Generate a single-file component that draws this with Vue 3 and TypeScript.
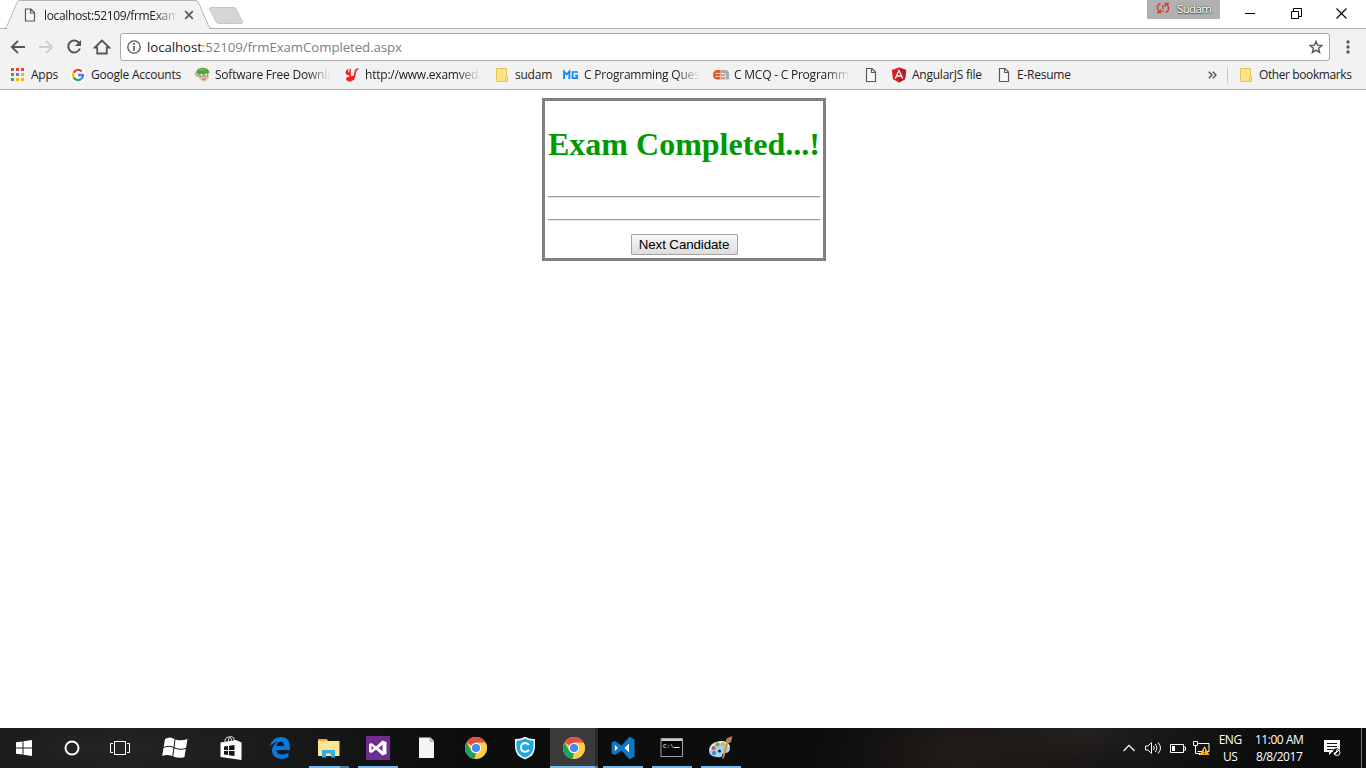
<script setup lang="ts">
interface Bookmark {
  icon: string
  label: string
  width: number
  fade?: boolean
}

const bookmarks: Bookmark[] = [
  { icon: 'apps', label: 'Apps', width: 60 },
  { icon: 'google', label: 'Google Accounts', width: 124 },
  { icon: 'softpedia', label: 'Software Free Downlo', width: 150, fade: true },
  { icon: 'veda', label: 'http://www.examveda', width: 150, fade: true },
  { icon: 'folder', label: 'sudam', width: 69 },
  { icon: 'mg', label: 'C Programming Quest', width: 150, fade: true },
  { icon: 'er', label: 'C MCQ - C Programm', width: 150, fade: true },
  { icon: 'file', label: '', width: 28 },
  { icon: 'angular', label: 'AngularJS file', width: 105 },
  { icon: 'file', label: 'E-Resume', width: 90 },
]

interface TaskItem {
  icon: string
  state?: 'running' | 'active' | 'grouped'
}

const tasks: TaskItem[] = [
  { icon: 'store' },
  { icon: 'edge' },
  { icon: 'explorer', state: 'grouped' },
  { icon: 'vs', state: 'running' },
  { icon: 'doc' },
  { icon: 'chrome' },
  { icon: 'shield' },
  { icon: 'chrome', state: 'active' },
  { icon: 'vscode', state: 'running' },
  { icon: 'cmd', state: 'running' },
  { icon: 'paint', state: 'running' },
]
</script>

<template>
  <div class="screen">
    <header class="tabstrip">
      <div class="tab">
        <svg class="tab-shape" width="245" height="29" viewBox="0 0 245 29">
          <path d="M7 29L18 1H197L209 29Z" fill="#f2f2f2" />
          <path d="M0 28.500H4Q6 28 7 26L17 2.500Q18 .500 20 .500H195Q197.500 .500 198.500 2.500L208.500 26Q210 28.500 212 28.500H245" fill="none" stroke="#b2b2b2" />
          <path d="M211 7.500H234Q235.500 7.500 236.500 9.500L242.500 22Q243 23.500 241 23.500H219Q217 23.500 216 21.500L209.500 9Q209 7.500 211 7.500Z" fill="#d6d6d6" stroke="#c6c6c6" />
        </svg>
        <svg class="tab-page" width="12" height="14" viewBox="0 0 12 14"><path d="M1.500 1H7L10.500 4.500V13H1.500ZM6.500 1V5H10.500" fill="#f7f7f7" stroke="#5a5a5a" stroke-width="1.200" /></svg>
        <span class="tab-title">localhost:52109/frmExam</span>
        <svg class="tab-close" width="10" height="10" viewBox="0 0 10 10"><path d="M1.200 1.200L8.800 8.800M8.800 1.200L1.200 8.800" stroke="#5a5a5a" stroke-width="1.700" /></svg>
      </div>
      <div class="profile">
        <svg width="14" height="12" viewBox="0 0 14 12" fill="none" stroke="#d23b30" stroke-width="1.400">
          <path d="M4.500 1.500Q1 3 1.500 6.500Q2.300 9 4 9.800M1 10.500H4.700V7.500M9.500 10.500Q13 9 12.500 5.500Q11.700 3 10 2.200M13 1.500H9.300V4.500M7 3V7M7 8.300V9.800" />
        </svg>
        <span>Sudam</span>
      </div>
      <div class="window-controls">
        <svg width="11" height="11" viewBox="0 0 11 11"><path d="M0 5.500H10" stroke="#000" /></svg>
        <svg width="11" height="11" viewBox="0 0 11 11" fill="none" stroke="#000"><path d="M.5 3.500H7.500V10.500H.5ZM2.500 3.500V.5H10.500V8.500H7.500" /></svg>
        <svg width="11" height="11" viewBox="0 0 11 11"><path d="M.5 .5L10.500 10.500M10.500 .5L.5 10.500" stroke="#000" stroke-width="1.100" /></svg>
      </div>
    </header>

    <div class="toolbar">
      <div class="nav">
        <svg width="16" height="16" viewBox="0 0 16 16"><path d="M15 8H2.500M8 1.800L1.800 8L8 14.200" fill="none" stroke="#555" stroke-width="1.900" /></svg>
        <svg width="16" height="16" viewBox="0 0 16 16"><path d="M1 8H13.500M8 1.800L14.200 8L8 14.200" fill="none" stroke="#d0d0d0" stroke-width="1.900" /></svg>
        <svg width="16" height="16" viewBox="0 0 16 16"><path d="M13.300 4.300A6 6 0 1 0 13.900 9.500" fill="none" stroke="#555" stroke-width="2" /><path d="M15 1V7H9Z" fill="#555" /></svg>
        <svg width="18" height="16" viewBox="0 0 18 16"><path d="M9 1.500L1.800 8.500H4.200V14.500H13.800V8.500H16.200Z" fill="none" stroke="#555" stroke-width="1.800" /></svg>
      </div>
      <div class="address">
        <svg width="14" height="14" viewBox="0 0 14 14"><circle cx="7" cy="7" r="6.200" fill="none" stroke="#555" stroke-width="1.300" /><path d="M7 6V10.800M7 3V4.700" stroke="#555" stroke-width="1.700" /></svg>
        <span class="url"><b>localhost</b>:52109/frmExamCompleted.aspx</span>
        <svg class="star" width="14" height="14" viewBox="0 0 14 14"><path d="M7 1.400L8.600 5.200L12.800 5.500L9.600 8.200L10.600 12.400L7 10.100L3.400 12.400L4.400 8.200L1.200 5.500L5.400 5.200Z" fill="none" stroke="#555" stroke-width="1.400" /></svg>
      </div>
      <svg class="menu" width="4" height="14" viewBox="0 0 4 14" fill="#555"><circle cx="2" cy="2" r="1.650" /><circle cx="2" cy="7" r="1.650" /><circle cx="2" cy="12" r="1.650" /></svg>
    </div>

    <nav class="bookmarks">
      <div v-for="(item, i) in bookmarks" :key="i" class="bookmark" :style="{ width: item.width + 'px' }">
        <svg width="16" height="16" viewBox="0 0 16 16">
          <g v-if="item.icon === 'apps'">
            <path d="M1 1h3v3H1zM6 1h3v3H6zM11 1h3v3H11z" fill="#ea4335" />
            <path d="M1 6h3v3H1zM1 11h3v3H1z" fill="#34a853" /><path d="M6 6h3v3H6z" fill="#4285f4" />
            <path d="M11 6h3v3H11zM6 11h3v3H6zM11 11h3v3H11z" fill="#fbb400" />
          </g>
          <g v-else-if="item.icon === 'google'" fill="none" stroke-width="2.300">
            <circle cx="8" cy="8" r="8" fill="#fff" />
            <path d="M11.800 4.500A5 5 0 0 0 3.600 5.800" stroke="#ea4335" /><path d="M3.600 5.800A5 5 0 0 0 3.600 10.400" stroke="#fbbc05" />
            <path d="M3.600 10.400A5 5 0 0 0 11 12.100" stroke="#34a853" /><path d="M11 12.100A5 5 0 0 0 13 8H8" stroke="#4285f4" />
          </g>
          <g v-else-if="item.icon === 'softpedia'">
            <path d="M4 8L14.500 7L15 11L11 15L6 13Z" fill="#efc49a" /><path d="M2 5Q4 .5 9 .8Q15 1 15.500 6L12 7L3 7.500Z" fill="#56a43c" /><path d="M5 3Q8 1.500 11 3" stroke="#8bc56f" fill="none" />
            <path d="M0 6L5 7L7 11L2 9.500Z" fill="#c6b98b" /><circle cx="7.500" cy="8" r="1.700" fill="#e9f4e8" stroke="#567b62" stroke-width=".8" /><circle cx="12" cy="7.700" r="1.700" fill="#e9f4e8" stroke="#567b62" stroke-width=".8" /><path d="M8 12Q10 13 12 11.500" fill="none" stroke="#a75c44" stroke-width=".8" />
          </g>
          <g v-else-if="item.icon === 'veda'">
            <path d="M4.500 1.500Q.5 4 2 7Q3 8.500 5 8L5.500 9.500Q1.800 10 2 12.500Q4 15.500 8 14Q10 13 9.500 8.500L8 10Q6 8 7 1.500L5.500 2.500L5 5.500L4 5Z" fill="#f51e20" /><path d="M9 13Q11 9 11.500 4Q12 2 14.500 2M8.500 9L10 11" fill="none" stroke="#f51e20" stroke-width="1.700" />
          </g>
          <g v-else-if="item.icon === 'folder'"><path d="M2.500 1.500H12.500V10H13.500V14.500H2.500Z" fill="#ffe38b" stroke="#e6c65b" /><path d="M11.500 14V10.500H13" fill="none" stroke="#e6c65b" /></g>
          <g v-else-if="item.icon === 'mg'" fill="none" stroke="#0788f5">
            <path d="M1 12V4.500L3.700 7.500L6.400 4.500V12" stroke-width="1.800" /><path d="M15 5H9.500V11.200H14.200V8.500H12" stroke-width="1.700" />
          </g>
          <g v-else-if="item.icon === 'er'">
            <path d="M7.500 3H5Q0 3 0 8Q0 12.500 5 12.500H7.500Z" fill="#e85426" /><path d="M8 3H12Q16 3 16 7V12.500H8Z" fill="#aaa9ae" />
            <path d="M2.500 6.500H7.500M2.500 9.500H7.500M8 6.500H12Q13.500 8 12 9.500H8M12 9.500L13 12.500" stroke="#f5e9e5" fill="none" stroke-width=".9" />
          </g>
          <path v-else-if="item.icon === 'file'" d="M3.500 1.500H9L12.500 5V14.500H3.500ZM8.500 1.500V5.500H12.500" fill="#f9f9f9" stroke="#5a5a5a" stroke-width="1.200" />
          <g v-else><path d="M8 .5L15.200 3L14 12.200L8 15.500L2 12.200L.8 3Z" fill="#dd1b2a" /><path d="M8 .5L15.200 3L14 12.200L8 15.500Z" fill="#b51b2b" /><path d="M4.300 11.500L8 3.300L11.700 11.500M5.500 9H10.500" fill="none" stroke="#fff" stroke-width="1.300" /></g>
        </svg>
        <span v-if="item.label" :class="['label', { fade: item.fade }]">{{ item.label }}</span>
      </div>
      <div class="bookmark-end">
        <svg width="9" height="8" viewBox="0 0 9 8"><path d="M.8 .8L4 4L.8 7.200M4.800 .8L8 4L4.800 7.200" fill="none" stroke="#555" stroke-width="1.500" /></svg>
        <i></i>
        <svg width="16" height="16" viewBox="0 0 16 16"><path d="M2.500 1.500H12.500V10H13.500V14.500H2.500Z" fill="#ffe38b" stroke="#e6c65b" /><path d="M11.500 14V10.500H13" fill="none" stroke="#e6c65b" /></svg>
        <span class="label other">Other bookmarks</span>
      </div>
    </nav>

    <main class="page">
      <section class="panel">
        <h1>Exam Completed...!</h1>
        <hr class="first" />
        <hr class="second" />
        <button type="button">Next Candidate</button>
      </section>
    </main>

    <footer class="taskbar">
      <div class="system">
        <svg width="16" height="16" viewBox="0 0 16 16" fill="#fff"><path d="M0 2.300L6.500 1.400V7.500H0ZM7.500 1.200L16 0V7.500H7.500ZM0 8.500H6.500V14.600L0 13.700ZM7.500 8.500H16V16L7.500 14.800Z" /></svg>
      </div>
      <div class="system"><svg width="16" height="16" viewBox="0 0 16 16"><circle cx="8" cy="8" r="6.500" fill="none" stroke="#fff" stroke-width="2" /></svg></div>
      <div class="system"><svg width="20" height="14" viewBox="0 0 20 14" fill="none" stroke="#fff"><path d="M4.500 .5H15.500V13.500H4.500ZM3 2.500H.5V11.500H3M17 2.500H19.500V11.500H17" /></svg></div>
      <div class="system wide"><svg width="26" height="22" viewBox="0 0 26 22" fill="#fff"><path d="M3 2Q8 -1 12.500 2L11.500 10Q7 7.500 1.700 10ZM13.500 2.400Q19 4.500 25.500 2L24 11Q18 12.500 12.500 10.400ZM1.500 11Q7 8.500 11.300 11L10.300 19Q5 17 .2 19ZM12.300 11.400Q18 13.500 23.800 12L22.500 20Q17 22 11.300 19.400Z" /></svg></div>
      <div v-for="(task, i) in tasks" :key="i" :class="['task', task.state]">
        <svg width="24" height="24" viewBox="0 0 24 24">
          <g v-if="task.icon === 'store'">
            <path d="M1.500 6.500L17 4L22.500 6.500V24L1.500 21Z" fill="#fff" /><path d="M6 7V4Q7 .5 10.500 .8Q12.500 1 12.500 5M9.500 5Q9.500 .5 12.500 .5Q15.500 1 15.500 5" fill="none" stroke="#ddd" />
            <path d="M5 10.500L9 10V14H5ZM10 9.800L15.500 9V14H10ZM5 15H9V19L5 18.500ZM10 15H15.500V20L10 19.200Z" fill="#151515" />
          </g>
          <path v-else-if="task.icon === 'edge'" d="M2 11Q3.500 1 13 1Q22 1 22 12V14H8.500Q9 18.500 14 18.500Q18 18.500 20.500 16.800V21Q17 23 13 23Q4 22 4 14.500Q4 9 9.500 6Q4.500 6.500 2 11ZM8.500 10H16Q16 5.500 12.500 5.500Q9 5.800 8.500 10Z" fill="#0879dc" />
          <g v-else-if="task.icon === 'explorer'">
            <path d="M1 3H9.500L11 5H22.500V20H1Z" fill="#ffe294" /><path d="M1 3H9.500L10.500 5H1Z" fill="#edae25" /><path d="M5 21.500V14H18V21.500H14V17.500H9V21.500Z" fill="#2faee6" />
          </g>
          <g v-else-if="task.icon === 'vs'"><path d="M0 0H24V24H0Z" fill="#702d91" /><path d="M3 8L5.500 7L10 10.500L16.500 4.500L20.500 6V18L16.500 19.500L10 13.500L5.500 17L3 16ZM5.500 10V14L8 12ZM16.500 8.700L12.700 12L16.500 15.300Z" fill="#fff" fill-rule="evenodd" /></g>
          <g v-else-if="task.icon === 'doc'"><path d="M4 1.500H15.500L19 5V22H4Z" fill="#f4f4f4" /><path d="M15 1.500V5.500H19" fill="#ccc" stroke="#999" stroke-width=".8" /></g>
          <g v-else-if="task.icon === 'chrome'">
            <circle cx="12" cy="12" r="11" fill="#ffcd42" />
            <path d="M12 12L2.500 6.500A11 11 0 0 1 21.500 6.500H12Z" fill="#df5145" /><path d="M2.500 6.500L8 16L12 17L10.500 22.900A11 11 0 0 1 2.500 6.500Z" fill="#18a263" /><path d="M11.500 7H21.800Q23 9 23 12Q22.500 21 10.500 22.900L16 14Z" fill="#ffcd42" />
            <circle cx="12" cy="12" r="5.200" fill="#fff" /><circle cx="12" cy="12" r="4.100" fill="#4688f4" />
          </g>
          <g v-else-if="task.icon === 'shield'"><path d="M12 .8Q17 3.500 22 3V11Q22 20 12 23.500Q2 20 2 11V3Q7 3.500 12 .8Z" fill="#eefbff" /><path d="M12 2.500Q16 4.700 20.500 4.700V11Q20.500 18.500 12 21.800Q3.500 18.500 3.500 11V4.700Q8 4.700 12 2.500Z" fill="#21a9df" /><path d="M16 9Q14.500 7 12 7Q8 7.500 8 11.500Q8 15.500 12 15.700Q14.500 15.700 16 14" fill="none" stroke="#fff" stroke-width="1.900" /></g>
          <g v-else-if="task.icon === 'vscode'"><path d="M3.500 7.500V16.500L8.500 12ZM19 6L12.500 12L19 18Z" fill="#fff" /><path d="M.5 6.500L4 5L10.500 9.500L18.500 .8L23.500 3.500V20.500L18.500 23.500L10.500 14.500L4 19L.5 17.500ZM3.500 8.500V15.500L7 12ZM18 7.500L13.500 12L18 16.500Z" fill="#087ac9" fill-rule="evenodd" /></g>
          <g v-else-if="task.icon === 'cmd'"><path d="M1 2.500H22.500V20.500H1Z" fill="#080808" stroke="#a3a3a3" /><path d="M1.500 3H22V5H1.500Z" fill="#cfd0d0" /><text x="3" y="12">C:\</text><path d="M14 11.500H19.500" stroke="#fff" /></g>
          <g v-else>
            <path d="M0 15Q0 6 12 5Q21 5 21 12Q21 17 16 17Q13 17 13 20Q12 22 7 21Q0 20 0 15Z" fill="#a7d0eb" /><path d="M1 14Q3 7 12 6Q19 6 20 11" fill="none" stroke="#e4f4fe" stroke-width="1.500" />
            <circle cx="4.500" cy="12" r="2" fill="#de4b39" /><circle cx="8.500" cy="8.500" r="2" fill="#63ad46" /><circle cx="14" cy="8" r="2" fill="#e4b528" /><circle cx="5" cy="17" r="2" fill="#3982c8" /><circle cx="10.500" cy="15" r="1.600" fill="#0c3047" />
            <path d="M13 23L17 7L19 7.500L15 22Z" fill="#e68a23" /><path d="M17 7Q16 4 18.500 2L23.500 0L22 6Q20 8 17 7Z" fill="#b78358" />
          </g>
        </svg>
      </div>
      <div class="tray">
        <svg width="12" height="8" viewBox="0 0 12 8"><path d="M.5 7L6 1.300L11.500 7" fill="none" stroke="#fff" stroke-width="1.200" /></svg>
        <svg width="17" height="14" viewBox="0 0 17 14"><path d="M.5 5H3L6.500 1.500V12.500L3 9H.5ZM8.500 5Q10 7 8.500 9M10.500 3Q13.500 7 10.500 11M13 1.500Q18 7 13 12.500" fill="none" stroke="#fff" /></svg>
        <svg width="16" height="9" viewBox="0 0 16 9"><path d="M.5 .5H13.500V8.500H.5ZM14 3H15.500V6H14" fill="none" stroke="#fff" /><path d="M2 2H5V7H2Z" fill="#fff" /></svg>
        <svg width="17" height="15" viewBox="0 0 17 15"><path d="M4.500 2.500H16V10.500H4.500M.5 .5H4.500V4.500H.5ZM2.500 4.500V12.500H9M6 13.500H9" fill="none" stroke="#fff" /><path d="M11.500 5L16.500 14H6.500Z" fill="#f5b321" /><path d="M11.500 8V11M11.500 12V13" stroke="#111" /></svg>
        <div class="language"><span>ENG</span><span>US</span></div>
        <div class="clock"><span>11:00 AM</span><span>8/8/2017</span></div>
        <svg class="notice" width="17" height="17" viewBox="0 0 17 17"><path d="M0 0H16V12H8L5 15V12H0Z" fill="#fff" /><path d="M3 3.500H13M3 6.500H13M3 9.500H9" stroke="#111" /><circle cx="12.500" cy="12" r="3.700" fill="#151515" /><path d="M10 13A3 3 0 1 0 13 9.500Q13.500 13 10 13M10 15L15 10" stroke="#fff" fill="none" /></svg>
      </div>
      <i class="desktop-edge"></i>
    </footer>
  </div>
</template>

<style>
body { overflow: hidden; }
</style>

<style scoped>
* { box-sizing: border-box; }
svg { display: block; flex: none; }
.screen { width: 1366px; height: 768px; display: flex; flex-direction: column; background: #fff; color: #222; font-family: "Open Sans", "Noto Sans", sans-serif; font-size: 12px; overflow: hidden; }
.tabstrip { height: 29px; display: flex; align-items: flex-start; flex: none; background: linear-gradient(#fff 28px, #b2b2b2 28px); }
.tab { width: 245px; height: 29px; position: relative; display: flex; align-items: center; padding: 1px 0 0 24px; }
.tab > * { position: relative; }
.tab > .tab-shape { position: absolute; left: 0; top: 0; }
.tab-title { width: 134px; margin-left: 8px; white-space: nowrap; letter-spacing: -.36px; mask-image: linear-gradient(90deg, #000 110px, transparent 134px); }
.tab-close { margin-left: 6px; }
.profile { width: 73px; height: 19px; margin-left: 902px; display: flex; align-items: center; padding-left: 9px; gap: 7px; background: #b1b1b1; color: #fff; font-size: 11.500px; letter-spacing: -.65px; text-shadow: 0 0 2px #333, 0 1px 1px #555; }
.profile span { margin-top: -2px; }
.profile svg { margin-top: -3px; }
.window-controls { display: flex; gap: 34.500px; margin: 8px 0 0 25px; }
.toolbar { height: 36px; background: #f2f2f2; display: flex; align-items: center; flex: none; }
.nav { display: flex; gap: 12px; width: 120px; padding-left: 10px; align-items: center; }
.nav svg:last-child { margin-left: -1px; }
.address { width: 1210px; height: 28px; border: 1px solid #a9a9a9; border-radius: 3px; background: #fff; display: flex; align-items: center; padding: 0 6px; }
.url { margin-left: 6px; color: #808080; font-size: 13.300px; letter-spacing: -.1px; }
.url b { color: #222; font-weight: 400; }
.star { margin-left: auto; }
.menu { margin-left: 16px; }
.bookmarks { height: 25px; padding: 0 0 5px 10px; background: #f2f2f2; border-bottom: 1px solid #b4b4b4; display: flex; align-items: center; flex: none; }
.bookmark { display: flex; align-items: center; flex: none; }
.label { margin-left: 5px; white-space: nowrap; letter-spacing: -.24px; }
.label.fade { width: 116px; flex: none; letter-spacing: -.22px; mask-image: linear-gradient(90deg, #000 92px, transparent 116px); }
.label.other { letter-spacing: -.4px; }
.bookmark-end { margin-left: auto; display: flex; align-items: center; width: 158px; }
.bookmark-end i { width: 1px; height: 16px; background: #c7c7c7; margin: 0 10px; }
.page { flex: 1; min-height: 0; padding-top: 8px; }
.panel { width: 284px; height: 163px; margin: 0 auto 0 542px; border: 3px solid #808080; padding: 3px; text-align: center; }
h1 { margin: 22px 0 33px; font: bold 32px/37px "Liberation Serif", serif; color: #090; white-space: nowrap; }
hr { border: 0; border-top: 1px solid #9a9a9a; border-bottom: 1px solid #e4e4e4; height: 2px; margin: 0; }
hr.second { margin-top: 21px; }
button { display: block; width: 107px; height: 21px; margin: 13px auto 0; padding: 0; border: 1px solid #a4a4a4; border-radius: 1px; background: linear-gradient(#f7f7f7, #ddd); color: #000; font: 13.333px/18px "Liberation Sans", Arial, sans-serif; letter-spacing: -.1px; }
.taskbar { height: 40px; flex: none; display: flex; background: radial-gradient(ellipse 140px 65px at 960px 25px, #231c19, transparent), radial-gradient(ellipse 180px 60px at 1080px 5px, #24211f, transparent), radial-gradient(ellipse 340px 80px at 120px 20px, #252525, transparent), #0c0d0d; color: #fff; }
.system { width: 48px; height: 40px; display: flex; align-items: center; justify-content: center; }
.system.wide { width: 62px; }
.task { width: 49px; height: 40px; display: flex; align-items: center; justify-content: center; }
.running { background: linear-gradient(#76b9ed, #76b9ed) 5px 38px / 40px 2px no-repeat; }
.grouped { background: linear-gradient(90deg, #76b9ed 31px, #4f7c9e 31px) 5px 38px / 40px 2px no-repeat; }
.active { background: linear-gradient(90deg, #76b9ed 45px, #4f7c9e 45px) 1px 38px / 48px 2px no-repeat, linear-gradient(90deg, #3b3b3b 45px, #202020 45px, #2d2d2d 46px) 1px 0 / 48px 38px no-repeat; }
.task text { font: 6px "Liberation Mono", monospace; fill: #fff; }
.tray { width: 218px; height: 40px; margin-left: auto; display: flex; align-items: center; }
.tray > svg:nth-child(2) { margin-left: 10px; }
.tray > svg:nth-child(3) { margin-left: 8px; }
.tray > svg:nth-child(4) { margin-left: 7px; }
.language, .clock { display: flex; flex-direction: column; align-items: center; font-size: 12px; line-height: 17px; letter-spacing: -.45px; white-space: nowrap; }
.language { width: 25px; margin-left: 8px; }
.clock { width: 51px; margin-left: 12px; }
.tray > .notice { margin-left: 20px; }
.desktop-edge { width: 1px; margin: 0 4px 0 20px; background: #727272; }
</style>
